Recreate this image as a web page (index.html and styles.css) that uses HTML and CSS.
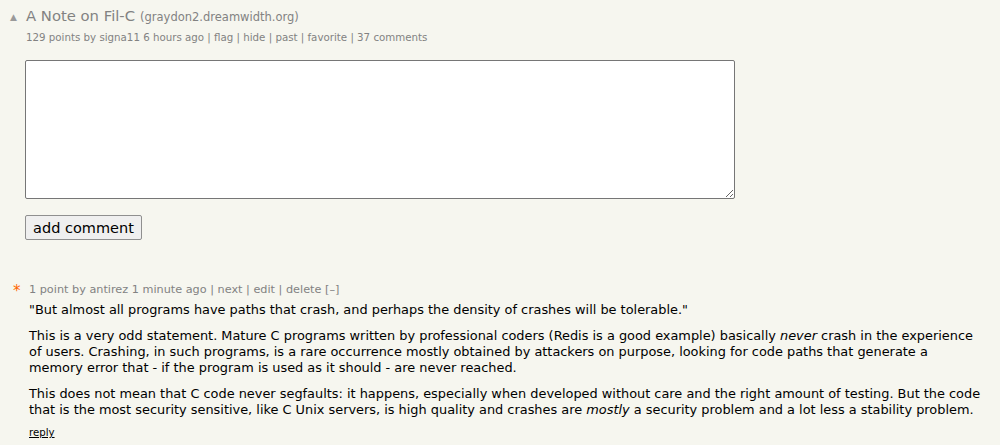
FILE: index.html
```html
<!DOCTYPE html>
<html>
<head>
<meta charset="utf-8">
<link rel="stylesheet" href="styles.css">
</head>
<body>
<div class="page">
  <div class="story">
    <div class="titlerow">
      <span class="vote">&#9650;</span>
      <span class="title">A Note on Fil-C</span>
      <span class="site">(graydon2.dreamwidth.org)</span>
    </div>
    <div class="subtext">129 points by signa11 6 hours ago | flag | hide | past | favorite | 37 comments</div>
  </div>
  <form class="form">
    <textarea class="box"></textarea>
    <button type="button" class="btn">add comment</button>
  </form>
  <div class="comment">
    <div class="star">*</div>
    <div class="cbody">
      <div class="comhead">1 point by antirez 1 minute ago | next | edit | delete [&ndash;]</div>
      <div class="ctext">
        <p>"But almost all programs have paths that crash, and perhaps the density of crashes will be tolerable."</p>
        <p>This is a very odd statement. Mature C programs written by professional coders (Redis is a good example) basically <i>never</i> crash in the experience of users. Crashing, in such programs, is a rare occurrence mostly obtained by attackers on purpose, looking for code paths that generate a memory error that - if the program is used as it should - are never reached.</p>
        <p>This does not mean that C code never segfaults: it happens, especially when developed without care and the right amount of testing. But the code that is the most security sensitive, like C Unix servers, is high quality and crashes are <i>mostly</i> a security problem and a lot less a stability problem.</p>
      </div>
      <div class="reply"><a>reply</a></div>
    </div>
  </div>
</div>
</body>
</html>
```
FILE: styles.css
```css
html, body {
  margin: 0;
  padding: 0;
  background: #f6f6ef;
}
.page {
  font-family: Verdana, "DejaVu Sans", sans-serif;
  color: #000;
  padding: 7px 0 0 0;
}
.titlerow {
  display: flex;
  align-items: baseline;
  padding-left: 10px;
  white-space: nowrap;
}
.vote {
  color: #9a9a9a;
  font-size: 9px;
  width: 16px;
  position: relative;
  top: -1px;
}
.title {
  color: #828282;
  font-size: 14.8px;
}
.site {
  color: #828282;
  font-size: 11.5px;
  margin-left: 5px;
}
.subtext {
  color: #828282;
  font-size: 10.25px;
  padding-left: 26px;
  margin-top: 7px;
}
.form {
  display: flex;
  flex-direction: column;
  align-items: flex-start;
  padding-left: 25px;
  margin-top: 17px;
}
.box {
  width: 710px;
  height: 139px;
  box-sizing: border-box;
  border: 1px solid #767676;
  border-radius: 2px;
  background: #fff;
  margin: 0;
}
.btn {
  margin-top: 16px;
  font-family: Verdana, "DejaVu Sans", sans-serif;
  font-size: 14.5px;
  height: 25px;
  width: 117px;
  padding: 0;
  background: #efefef;
  border: 1px solid #8f8f8f;
  border-radius: 2px;
  color: #000;
}
.comment {
  display: flex;
  margin-top: 43px;
  padding-left: 13px;
}
.star {
  color: #ff6600;
  font-size: 15px;
  width: 16px;
  line-height: 16px;
}
.cbody {
  width: 955px;
}
.comhead {
  color: #828282;
  font-size: 11.25px;
  line-height: 14px;
}
.ctext {
  font-size: 12.9px;
  line-height: 16px;
  margin-top: 5px;
}
.ctext p {
  margin: 0 0 10px 0;
}
.reply {
  font-size: 10.2px;
  margin-top: -1px;
}
.reply a {
  color: #000;
  text-decoration: underline;
}
```
